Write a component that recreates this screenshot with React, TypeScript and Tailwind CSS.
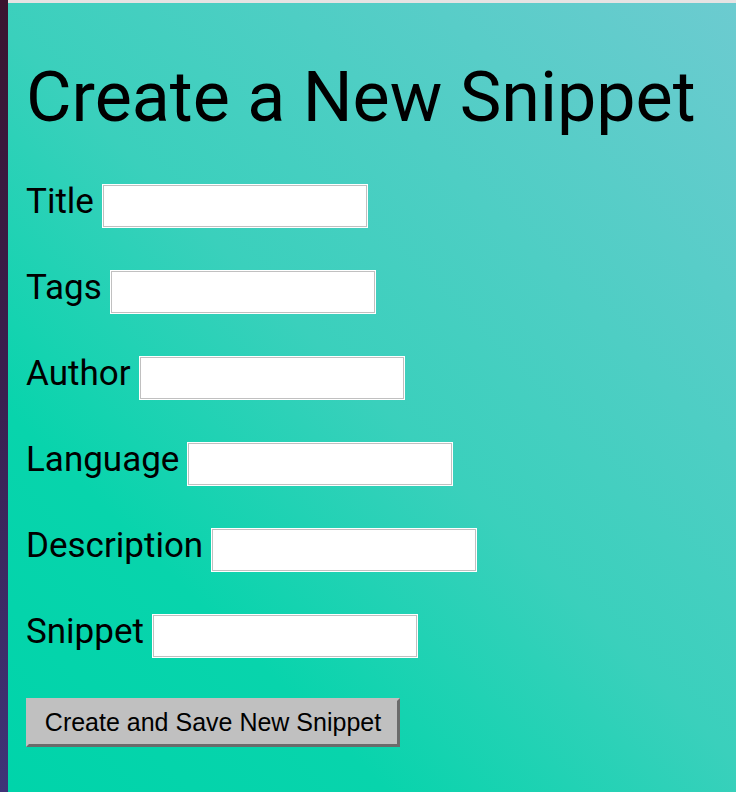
const fields = ["Title", "Tags", "Author", "Language", "Description", "Snippet"]

export default function App() {
  return (
    <div className="flex h-[792px] w-[736px] overflow-hidden">
      <div className="w-[8px] shrink-0 bg-[linear-gradient(to_bottom,#3a1530,#3a2050_50%,#3f3478)]" />
      <div className="flex flex-1 flex-col">
        <div className="h-[3px] bg-[#e6e3e3]" />
        <main className="flex-1 bg-[linear-gradient(45deg,#00d4aa_0%,#08d4ac_25%,#3ad0bc_50%,#6ccbd0_100%)] px-[18px] pt-[59px] font-['Roboto',sans-serif] text-black">
          <h1 className="whitespace-nowrap text-[70px] leading-[70px]">Create a New Snippet</h1>
          <form className="mt-[52px] flex flex-col gap-[43px]">
            {fields.map((f) => (
              <div key={f} className="flex items-start gap-[9px]">
                <label className="text-[35px] leading-[36px]">{f}</label>
                <input
                  type="text"
                  className="mt-px h-[42px] w-[264px] border border-[#c0c0c0] bg-white outline outline-1 outline-white focus:outline-none"
                />
              </div>
            ))}
            <div className="-mt-[2px]">
              <button
                type="button"
                className="h-[49px] w-[374px] border-[3px] border-b-[#6b6b6b] border-l-[#c0c0c0] border-r-[#6b6b6b] border-t-[#c0c0c0] bg-[#c0c0c0] font-['Liberation_Sans',sans-serif] text-[25px] text-black"
              >
                Create and Save New Snippet
              </button>
            </div>
          </form>
        </main>
      </div>
    </div>
  )
}
